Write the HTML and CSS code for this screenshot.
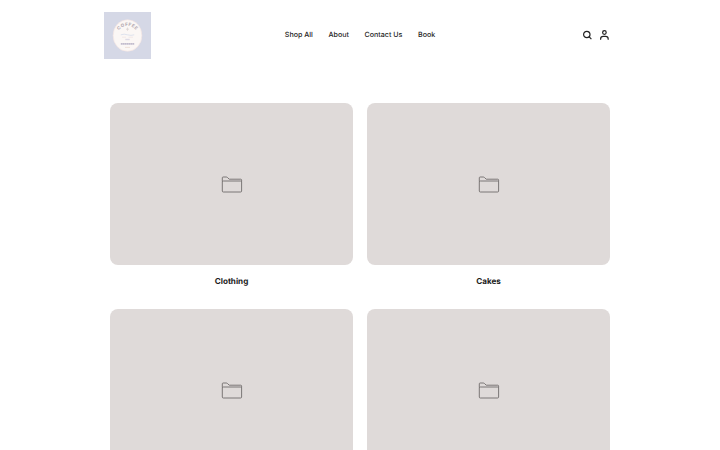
FILE: index.html
```html
<!DOCTYPE html>
<html lang="en">
<head>
  <meta charset="UTF-8">
  <meta name="viewport" content="width=device-width, initial-scale=1.0">
  <title>Shop</title>
  <link rel="stylesheet" href="styles.css">
</head>
<body>

  <svg class="symbols" width="0" height="0">
    <symbol id="folder" viewBox="0 0 22 18">
      <path d="M1.3 6.6V2.8q0-.8.8-.8H5.2q.8 0 1.4.6l1.6 1.6H19.7q.9 0 .9.9V6.6"/>
      <rect x="1.3" y="6" width="19.3" height="11" rx="1"/>
    </symbol>
  </svg>

  <header class="header">
    <a class="logo" href="#">
      <svg viewBox="0 0 47 47" width="47" height="47">
        <rect width="47" height="47" fill="#d5d8e6"/>
        <ellipse cx="23.5" cy="23.5" rx="14.4" ry="15.8" fill="#fbf7f5" stroke="#f3e3df" stroke-width=".6"/>
        <path id="arc" d="M14.2 19.4A10.6 10.6 0 0 1 32.8 19.4" fill="none"/>
        <text class="logo-name"><textPath href="#arc" startOffset="50%">COFFEE</textPath></text>
        <path d="M23.5 15.6v3.2M22 17.2h3" stroke="#dcd3d3" stroke-width=".8"/>
        <path d="M16.8 22.8q3.4-1.2 6.7 0q3.4 1.2 6.7 0" fill="none" stroke="#dfe3ee" stroke-width="1"/>
        <path d="M18 25.2h4M24.5 25.2h4.5" stroke="#f0e6e5" stroke-width=".9"/>
        <path d="M21.3 26.8h4.4v1.4h-4.4z" fill="#dedbe6"/>
        <path d="M16.8 31.8h13.4" stroke="#c2bccd" stroke-width="1.7" stroke-dasharray="1.7 .25"/>
        <path d="M21 35.4h5" stroke="#ecdcd6" stroke-width=".9"/>
      </svg>
    </a>

    <nav class="nav">
      <a href="#">Shop All</a>
      <a href="#">About</a>
      <a href="#">Contact Us</a>
      <a href="#">Book</a>
    </nav>

    <div class="actions">
      <svg viewBox="0 0 10 10" width="10" height="10">
        <circle cx="4.8" cy="4.5" r="3.2"/>
        <path d="M7.2 6.9L9.4 9.1"/>
      </svg>
      <svg viewBox="0 0 10 10" width="10" height="10">
        <circle cx="5.4" cy="2.5" r="1.8"/>
        <path d="M1.6 9.7V9Q1.6 6.3 4.2 6.3H6.6Q9.2 6.3 9.2 9V9.7"/>
      </svg>
    </div>
  </header>

  <main class="categories">
    <a class="category" href="#">
      <div class="thumb"><svg class="folder"><use href="#folder"/></svg></div>
      <h2>Clothing</h2>
    </a>
    <a class="category" href="#">
      <div class="thumb"><svg class="folder"><use href="#folder"/></svg></div>
      <h2>Cakes</h2>
    </a>
    <a class="category" href="#">
      <div class="thumb"><svg class="folder"><use href="#folder"/></svg></div>
    </a>
    <a class="category" href="#">
      <div class="thumb"><svg class="folder"><use href="#folder"/></svg></div>
    </a>
  </main>

</body>
</html>
```

FILE: styles.css
```css
* {
  margin: 0;
  padding: 0;
  box-sizing: border-box;
}

body {
  font-family: Inter, sans-serif;
  text-rendering: geometricPrecision;
  background: #fff;
  color: #1c1c1c;
  height: 450px;
  overflow: hidden;
}

a {
  color: inherit;
  text-decoration: none;
}

.symbols {
  display: block;
}

.header {
  width: 512px;
  height: 71px;
  margin: 0 auto;
  display: grid;
  grid-template-columns: 1fr auto 1fr;
  align-items: center;
}

.logo svg {
  display: block;
}

.logo-name {
  font-size: 4.5px;
  font-weight: 800;
  letter-spacing: 0.4px;
  text-anchor: middle;
  fill: #b9afb5;
}

.nav {
  display: flex;
  gap: 15.7px;
  padding-bottom: 2px;
  font-size: 7.1px;
  font-weight: 500;
  line-height: 10px;
}

.actions {
  display: flex;
  justify-content: flex-end;
  gap: 7px;
  padding-right: 7px;
  padding-bottom: 1px;
}

.actions svg {
  fill: none;
  stroke: #222;
  stroke-width: 1.2;
}

.categories {
  width: 500px;
  margin: 32.4px auto 0;
  display: grid;
  grid-template-columns: 1fr 1fr;
  column-gap: 14px;
  row-gap: 22px;
}

.thumb {
  height: 162px;
  border-radius: 8px;
  background: #dfdad9;
  display: flex;
  align-items: center;
  justify-content: center;
}

.folder {
  width: 22px;
  height: 18px;
  fill: none;
  stroke: #6f6b6b;
  stroke-width: 0.9;
}

.category h2 {
  margin-top: 10px;
  font-size: 8.1px;
  font-weight: 700;
  line-height: 12px;
  text-align: center;
}
```
